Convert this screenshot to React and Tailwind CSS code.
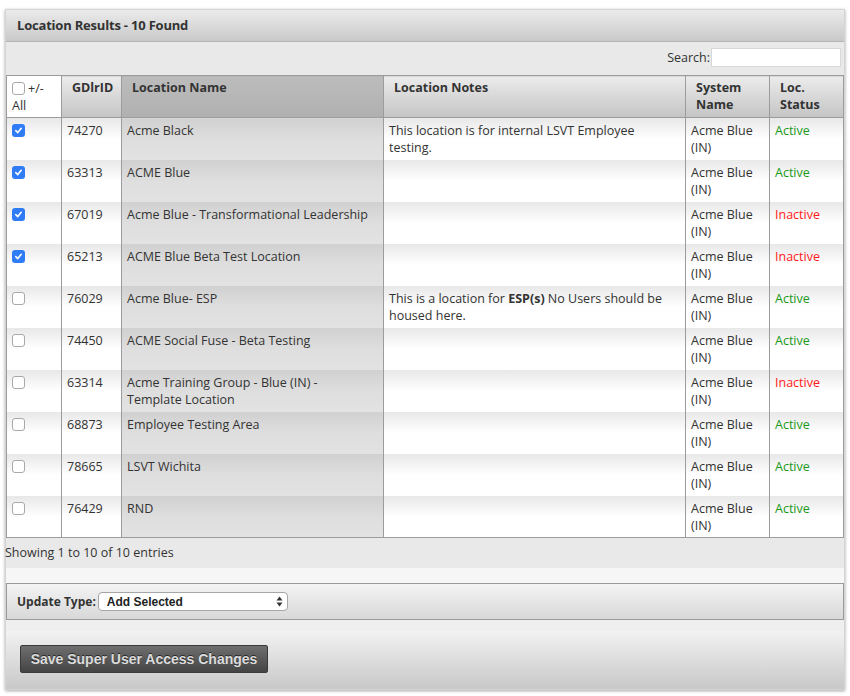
import React from "react";

const rows = [
  { id: "74270", name: "Acme Black", notes: "This location is for internal LSVT Employee testing.", active: true, checked: true },
  { id: "63313", name: "ACME Blue", notes: "", active: true, checked: true },
  { id: "67019", name: "Acme Blue - Transformational Leadership", notes: "", active: false, checked: true },
  { id: "65213", name: "ACME Blue Beta Test Location", notes: "", active: false, checked: true },
  { id: "76029", name: "Acme Blue- ESP", notes: "esp", active: true, checked: false },
  { id: "74450", name: "ACME Social Fuse - Beta Testing", notes: "", active: true, checked: false },
  { id: "63314", name: "Acme Training Group - Blue (IN) - Template Location", notes: "", active: false, checked: false },
  { id: "68873", name: "Employee Testing Area", notes: "", active: true, checked: false },
  { id: "78665", name: "LSVT Wichita", notes: "", active: true, checked: false },
  { id: "76429", name: "RND", notes: "", active: true, checked: false },
];

const Check = ({ checked }) =>
  checked ? (
    <span className="inline-flex w-[13px] h-[13px] rounded-[3px] bg-[#2f7cf6] items-center justify-center">
      <svg width="9" height="9" viewBox="0 0 10 10">
        <path d="M2 5.2 L4.2 7.3 L8 2.6" fill="none" stroke="#fff" strokeWidth="1.8" strokeLinecap="round" strokeLinejoin="round" />
      </svg>
    </span>
  ) : (
    <span className="inline-block w-[13px] h-[13px] rounded-[3px] border border-[#a9a9a9] bg-white" />
  );

const App = () => {
  return (
    <div className="bg-white w-[850px] h-[696px] pt-[9px] pl-[5px] font-['Open_Sans',sans-serif] text-[#333]">
      <div className="w-[840px] border border-[#d4d4d4] shadow-[0_1px_3px_rgba(0,0,0,0.35)] bg-[#ececec]">
        <div className="h-[32px] bg-gradient-to-b from-[#ebebeb] to-[#c9c9c9] border-b border-[#b4b4b4] pl-[11px] flex items-center text-[13px] font-bold tracking-[-0.2px]">
          Location Results - 10 Found
        </div>
        <div className="bg-[#e9e9e9]">
          <div className="h-[33px] flex items-start justify-end pt-[6px] pr-[3px] text-[12.5px]">
            <span className="mt-[1px]">Search:</span>
            <input className="w-[130px] h-[19px] bg-white border border-[#d8d8d8] ml-[1px] outline-none" />
          </div>
          <table className="w-[837px] border-collapse border border-[#9c9c9c] text-[12.5px] leading-[17px] table-fixed">
            <colgroup>
              <col className="w-[55px]" />
              <col className="w-[60px]" />
              <col className="w-[262px]" />
              <col className="w-[302px]" />
              <col className="w-[84px]" />
              <col className="w-[74px]" />
            </colgroup>
            <thead>
              <tr className="h-[42px] align-top text-left font-bold">
                <th className="bg-white border-r border-b border-[#9c9c9c] pl-[5px] pt-[4px] font-normal">
                  <div className="flex items-center gap-[3px] h-[17px]">
                    <Check checked={false} />
                    <span>+/-</span>
                  </div>
                  <div>All</div>
                </th>
                <th className="bg-gradient-to-b from-[#ececec] to-[#c4c4c4] border-r border-b border-[#9c9c9c] pl-[10px] pt-[3px]">GDlrID</th>
                <th className="bg-gradient-to-b from-[#bcbcbc] to-[#b0b0b0] border-r border-b border-[#9c9c9c] pl-[10px] pt-[3px]">Location Name</th>
                <th className="bg-gradient-to-b from-[#ececec] to-[#c4c4c4] border-r border-b border-[#9c9c9c] pl-[10px] pt-[3px]">Location Notes</th>
                <th className="bg-gradient-to-b from-[#ececec] to-[#c4c4c4] border-r border-b border-[#9c9c9c] pl-[10px] pt-[3px]">System Name</th>
                <th className="bg-gradient-to-b from-[#ececec] to-[#c4c4c4] border-b border-[#9c9c9c] pl-[10px] pt-[3px]">Loc. Status</th>
              </tr>
            </thead>
            <tbody>
              {rows.map((r) => (
                <tr key={r.id} className="h-[42px] align-top bg-gradient-to-b from-[#e8e8e8] via-[#ffffff] to-[#ffffff]">
                  <td className="border-r border-[#9c9c9c] pl-[5px] pt-[6px]">
                    <div className="h-[13px] flex">
                      <Check checked={r.checked} />
                    </div>
                  </td>
                  <td className="border-r border-[#9c9c9c] pl-[5px] pt-[4px]">{r.id}</td>
                  <td className="border-r border-[#9c9c9c] pl-[5px] pr-[12px] pt-[4px] bg-gradient-to-b from-[#d0d0d0] via-[#dedede] to-[#e2e2e2]">{r.name}</td>
                  <td className="border-r border-[#9c9c9c] pl-[5px] pr-[8px] pt-[4px]">
                    {r.notes === "esp" ? (
                      <>
                        This is a location for <b>ESP(s)</b> No Users should be housed here.
                      </>
                    ) : (
                      r.notes
                    )}
                  </td>
                  <td className="border-r border-[#9c9c9c] pl-[5px] pt-[4px]">
                    Acme Blue
                    <br />
                    (IN)
                  </td>
                  <td className={`pl-[5px] pt-[4px] ${r.active ? "text-[#1a9a1a]" : "text-[#ff1a1a]"}`}>
                    {r.active ? "Active" : "Inactive"}
                  </td>
                </tr>
              ))}
            </tbody>
          </table>
          <div className="h-[30px] flex items-center text-[12.5px] -ml-[1px]">Showing 1 to 10 of 10 entries</div>
        </div>
        <div className="h-[15px] bg-[#f6f6f6]" />
        <div className="h-[37px] bg-gradient-to-b from-[#f4f4f4] to-[#d8d8d8] border border-[#9a9a9a] flex items-center pl-[10px] text-[12px]">
          <span className="font-bold mr-[2px]">Update Type:</span>
          <div className="w-[190px] h-[19px] bg-white border border-[#a6a6a6] rounded-[4px] flex items-center justify-between pl-[8px] pr-[4px] font-['Liberation_Sans',Arial,sans-serif] font-bold text-[12px] text-[#222]">
            <span>Add Selected</span>
            <svg width="7" height="11" viewBox="0 0 7 11">
              <path d="M3.5 0.5 L6.5 4.5 L0.5 4.5 Z" fill="#333" />
              <path d="M3.5 10.5 L6.5 6.5 L0.5 6.5 Z" fill="#333" />
            </svg>
          </div>
        </div>
        <div className="h-[11px] bg-[#efefef]" />
        <div className="h-[58px] bg-gradient-to-b from-[#f2f2f2] to-[#c8c8c8] pl-[14px] pt-[14px]">
          <button className="w-[248px] h-[28px] rounded-[2px] bg-gradient-to-b from-[#6f6f6f] to-[#444] border border-[#3a3a3a] text-[#dcdcdc] font-bold text-[14px] font-['Liberation_Sans',Arial,sans-serif] [text-shadow:0_-1px_0_rgba(0,0,0,0.6)]">
            Save Super User Access Changes
          </button>
        </div>
      </div>
    </div>
  );
};

export default App;
